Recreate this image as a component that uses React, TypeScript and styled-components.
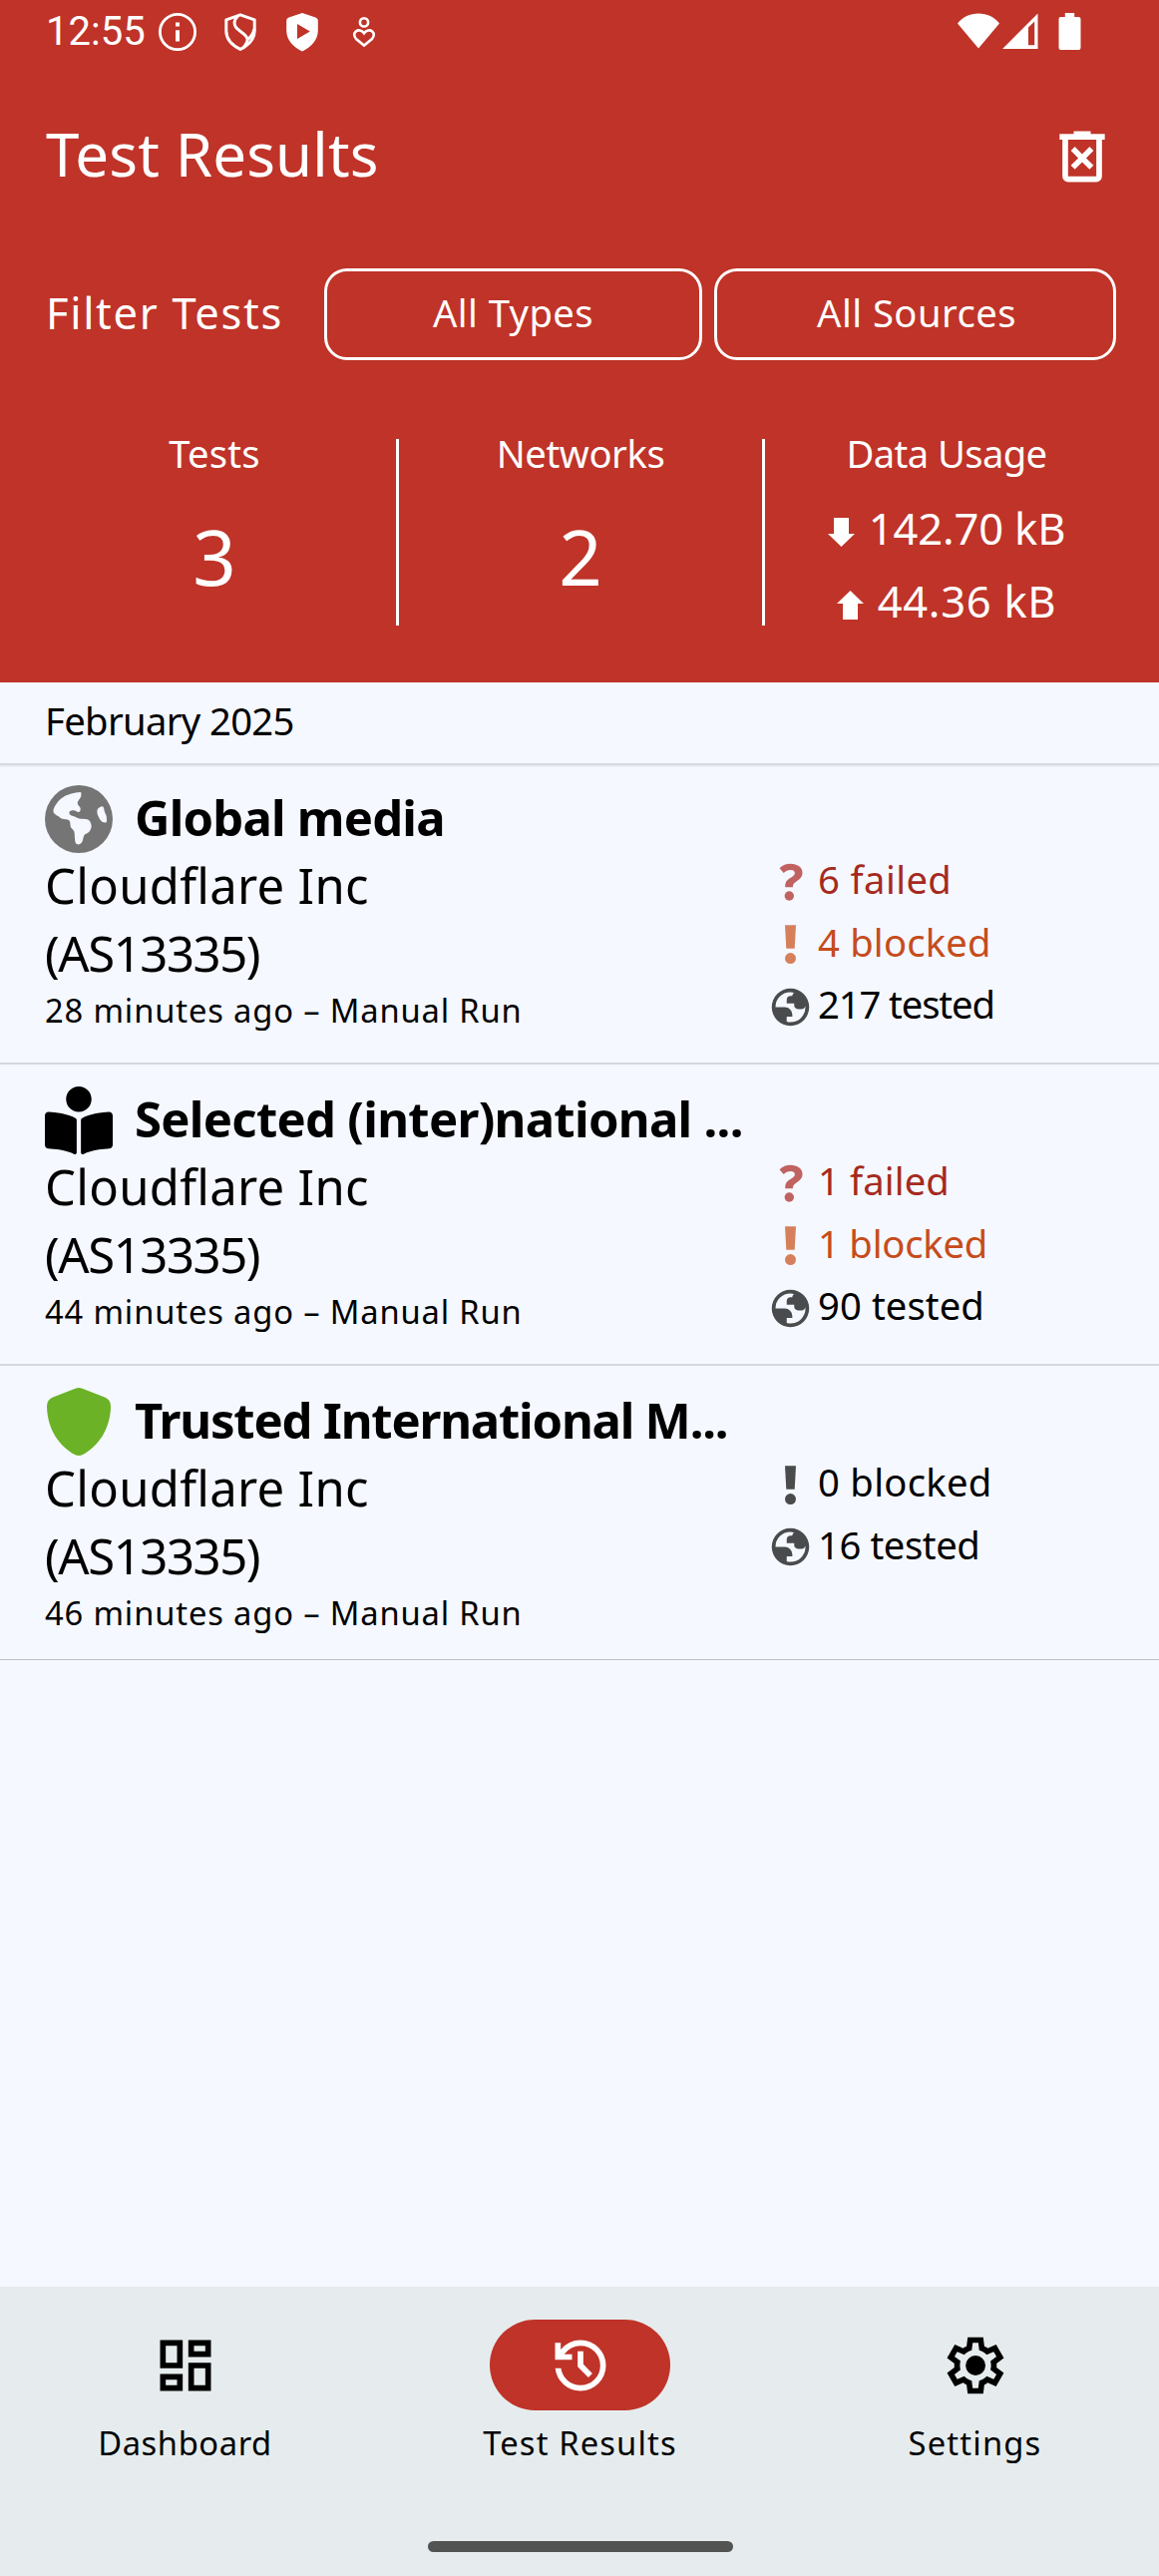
import React from 'react';
import styled, { createGlobalStyle } from 'styled-components';
import { FaBookReader } from 'react-icons/fa';

const GlobalStyle = createGlobalStyle`
  html, body { margin: 0; padding: 0; background: #f5f8ff; }
  *, *::before, *::after { box-sizing: border-box; }
`;

const red = '#bf3328';

const Screen = styled.div`
  width: 1162px;
  height: 2582px;
  display: flex;
  flex-direction: column;
  background: #f5f8ff;
  color: #000;
  font-family: 'Noto Sans', 'Open Sans', sans-serif;
  overflow: hidden;
  white-space: nowrap;
`;

const Header = styled.header`
  height: 684px;
  flex: none;
  background: ${red};
  color: #fff;
`;

const StatusBar = styled.div`
  height: 64px;
  display: flex;
  align-items: center;
  justify-content: space-between;
  padding: 0 78px 0 46px;
`;

const StatusGroup = styled.div<{ $gap: number }>`
  display: flex;
  align-items: center;
  gap: ${(p) => p.$gap}px;
`;

const Clock = styled.span`
  width: 90px;
  font: 400 40px/64px Roboto, sans-serif;
`;

const StatusIcon = styled.svg`
  display: block;
  flex: none;
  width: 40px;
  height: 40px;
`;

const SystemIcon = styled.svg<{ $w: number; $after?: number }>`
  display: block;
  width: ${(p) => p.$w}px;
  height: 38px;
  margin-right: ${(p) => p.$after ?? 0}px;
`;

const TitleBar = styled.div`
  height: 180px;
  display: flex;
  align-items: center;
  justify-content: space-between;
  padding: 0 43px 0 46px;
`;

const Title = styled.h1`
  margin: 0;
  font-size: 60px;
  font-weight: 400;
  line-height: 80px;
  letter-spacing: 0.15px;
`;

const Icon = styled.svg`
  display: block;
  flex: none;
  width: 68px;
  height: 68px;
  fill: currentColor;
`;

const DeleteButton = styled.button`
  margin: 5px 0 0;
  padding: 0;
  border: 0;
  background: none;
  color: inherit;
`;

const FilterRow = styled.div`
  display: flex;
  margin-top: 25px;
  height: 92px;
  padding: 0 43px 0 46px;
`;

const FilterLabel = styled.span`
  width: 279px;
  font-size: 43.5px;
  line-height: 88px;
  letter-spacing: 1.7px;
`;

const FilterButton = styled.button<{ $w: number; $track: number }>`
  width: ${(p) => p.$w}px;
  margin: 0;
  padding: 0 0 5px;
  border: 3px solid #fff;
  border-radius: 23px;
  background: none;
  color: #fff;
  font-family: inherit;
  font-size: 38.2px;
  line-height: 80px;
  letter-spacing: ${(p) => p.$track}px;
  & + & { margin-left: 12px; padding-left: 3px; }
`;

const Stats = styled.div`
  display: flex;
  height: 187px;
  margin-top: 79px;
  padding: 0 31px 0 33px;
`;

const Stat = styled.div`
  flex: 1;
  display: flex;
  flex-direction: column;
  align-items: center;
`;

const StatDivider = styled.div`
  width: 3px;
  background: #fff;
`;

const StatLabel = styled.span<{ $track: number }>`
  font-size: 38.2px;
  line-height: 28px;
  letter-spacing: ${(p) => p.$track}px;
`;

const StatValue = styled.span`
  margin-top: 52px;
  font-size: 76px;
  line-height: 76px;
`;

const Usage = styled.div<{ $track: number }>`
  display: flex;
  align-items: center;
  gap: 14px;
  height: 40px;
  margin-top: 33px;
  font-size: 43.5px;
  line-height: 40px;
  letter-spacing: ${(p) => p.$track}px;
  ${StatLabel} + & { margin-top: 41px; }
`;

const Arrow = styled.svg`
  width: 27px;
  height: 29px;
  margin-top: 8px;
  fill: currentColor;
`;

const Month = styled.div`
  position: relative;
  height: 83px;
  flex: none;
  padding-left: 45px;
  border-bottom: 2px solid #d6dae3;
  box-shadow: 0 1px 2px rgba(0, 0, 0, 0.09);
  font-size: 38.2px;
  line-height: 77px;
  letter-spacing: -0.65px;
`;

const List = styled.main`
  flex: 1;
`;

const Item = styled.article`
  padding: 22px 0 30px 45px;
  border-bottom: 2px solid #d3d7e1;
  &:first-child { padding-top: 20px; }
  &:last-child { padding-bottom: 24px; border-bottom: 1px solid #b9bdc7; }
`;

const ItemHead = styled.div`
  display: flex;
  gap: 22px;
  height: 66px;
`;

const ItemTitle = styled.h2<{ $track: number }>`
  margin: 0;
  font-size: 49px;
  font-weight: 700;
  line-height: 65px;
  letter-spacing: ${(p) => p.$track}px;
`;

const ItemBody = styled.div`
  display: flex;
  height: 182px;
`;

const Details = styled.div`
  width: 725px;
`;

const Network = styled.div<{ $track: number }>`
  font-size: 49px;
  line-height: 68px;
  letter-spacing: ${(p) => p.$track}px;
`;

const Time = styled.div`
  font-size: 32.7px;
  line-height: 47px;
  letter-spacing: 0.85px;
`;

const Counts = styled.div`
  display: flex;
  flex-direction: column;
`;

const tones = {
  failed: { text: '#a52a20', icon: '#c06260' },
  blocked: { text: '#c64c1b', icon: '#d6805b' },
  normal: { text: '#000', icon: '#494b4c' },
};
type Tone = keyof typeof tones;

const Count = styled.div<{ $tone: Tone; $track: number }>`
  display: flex;
  flex: none;
  align-items: center;
  gap: 5px;
  height: 62.5px;
  color: ${(p) => tones[p.$tone].text};
  font-size: 38.2px;
  line-height: 56px;
  letter-spacing: ${(p) => p.$track}px;
  svg { color: ${(p) => tones[p.$tone].icon}; }
  span { padding-bottom: 6px; }
`;

const CountIcon = styled.svg`
  width: 45px;
  height: 45px;
  fill: currentColor;
`;

const Nav = styled.nav`
  flex: none;
  height: 290px;
  display: flex;
  flex-direction: column;
  align-items: center;
  padding: 33px 0 0 1px;
  background: #e6ecee;
`;

const Tabs = styled.div`
  width: 100%;
  height: 222px;
  display: grid;
  grid-template-columns: repeat(3, 1fr);
  column-gap: 27px;
`;

const Tab = styled.div<{ $track: number }>`
  display: flex;
  flex-direction: column;
  align-items: center;
  font-size: 32.7px;
  line-height: 46px;
  letter-spacing: ${(p) => p.$track}px;
`;

const Pill = styled.div<{ $active?: boolean }>`
  width: 181px;
  height: 91px;
  margin-bottom: 10px;
  display: flex;
  align-items: center;
  justify-content: center;
  border-radius: 46px;
  background: ${(p) => (p.$active ? red : 'transparent')};
  color: ${(p) => (p.$active ? '#fff' : '#000')};
`;

const HomeBar = styled.div`
  width: 306px;
  height: 11px;
  border-radius: 6px;
  background: #525453;
`;

const GlobeIcon = () => (
  <Icon viewBox="0 0 68.5 68.5" color="#757575">
    <circle cx="34.25" cy="34.25" r="34.25" />
    <g fill="#f5f8ff">
      <path d="M36 7Q37 7.200 36.700 9.500C36.600 13.500 32.800 15.500 33 18.500C33.200 20.500 36 22 36 24Q36 27 34 27.200C32 27 31 25.400 29 25.400C27 25.400 24.500 26 24.500 28C25 30.500 27 31 29.500 31.600C32 32.300 33 33.800 36 34C40 34.200 43.500 34 45 36C47 38.500 47.200 41 46.800 43C46 46.500 43.500 48.400 40.500 49.700C38.500 51.500 39 55 37.500 57.500C36.500 59.600 34.500 60 33 59.800C30.500 59.300 30.500 56.500 30.200 53.500C29.900 50 30.500 47 28.500 45C26.500 43.300 25.800 42.500 25.700 40C25.600 37 25.500 35.500 22 34.500C18 34.300 16.500 34 14.500 32C11.500 30 9 29.500 8.500 26.500C8.300 23 11 19.500 13.500 16.300C19 9.800 28 7.500 36 7Z" />
      <path d="M58.500 21.300C60.500 23.500 59.500 26 61 28.500C62.500 31 62.700 34 62.300 37.600C59.500 38.200 57 37 55.500 34.500C53.800 31.500 52 28 53 24.800C54 22.500 56 21.500 58.500 21.300Z" />
    </g>
  </Icon>
);

const BookIcon = () => <Icon as={FaBookReader} />;

const ShieldIcon = () => (
  <Icon viewBox="-2 0 68 68" color="#6bb226">
    <path d="M28.500 .8Q32 -.8 35.500 .8L58 9.600Q64.300 12.300 64 19C63.500 42 51 59 36 67Q32 68.800 28 67C13 59 .5 42 0 19Q-.3 12.300 6 9.600Z" />
  </Icon>
);

const countIcons = {
  failed: (
    <CountIcon viewBox="0 0 45 45">
      <path d="M11.500 8.300C14.500 5.200 18.500 3.800 22.500 3.800C29.500 3.800 34.500 7.300 34.500 12.800C34.500 16.800 32 19.200 28.500 21.500C25.800 23.300 24.900 24.300 24.900 27.200H17.300C17 22.500 18.500 20.500 22 18.200C25 16.200 26.900 15.400 26.900 12.900C26.900 10.900 25.200 9.900 22.600 9.900C20 9.900 17.700 10.900 15.700 12.900Z" />
      <circle cx="21.300" cy="36" r="4.700" />
    </CountIcon>
  ),
  blocked: (
    <CountIcon viewBox="0 0 45 45">
      <path d="M17 3.200H28L26.700 26.800H18.300Z" />
      <circle cx="22.500" cy="36.600" r="5.500" />
    </CountIcon>
  ),
  tested: (
    <CountIcon viewBox="0 -960 960 960">
      <path d="M480-80q-83 0-156-31.500T197-197q-54-54-85.500-127T80-480q0-83 31.500-156T197-763q54-54 127-85.500T480-880q83 0 156 31.500T763-763q54 54 85.500 127T880-480q0 83-31.500 156T763-197q-54 54-127 85.500T480-80Zm0-80q134 0 227-93t93-227q0-7-.5-14.500T799-507q-5 29-27 48t-52 19h-80q-33 0-56.500-23.500T560-520v-40H400v-80q0-33 23.500-56.500T480-720h40q0-23 12.500-40.500T563-789q-20-5-40.500-8t-42.500-3q-134 0-227 93t-93 227h200q66 0 113 47t47 113v40H400v110q20 5 39.500 7.500T480-160Z" />
    </CountIcon>
  ),
};

type CountData = { kind: keyof typeof countIcons; tone: Tone; text: string; track: number };
type ResultData = {
  icon: React.ReactNode;
  title: string;
  track: number;
  time: string;
  counts: CountData[];
};

const results: ResultData[] = [
  {
    icon: <GlobeIcon />,
    title: 'Global media',
    track: -0.8,
    time: '28 minutes ago – Manual Run',
    counts: [
      { kind: 'failed', tone: 'failed', text: '6 failed', track: 0.4 },
      { kind: 'blocked', tone: 'blocked', text: '4 blocked', track: 0.2 },
      { kind: 'tested', tone: 'normal', text: '217 tested', track: -1.1 },
    ],
  },
  {
    icon: <BookIcon />,
    title: 'Selected (inter)national ...',
    track: -0.7,
    time: '44 minutes ago – Manual Run',
    counts: [
      { kind: 'failed', tone: 'failed', text: '1 failed', track: 0.1 },
      { kind: 'blocked', tone: 'blocked', text: '1 blocked', track: -0.2 },
      { kind: 'tested', tone: 'normal', text: '90 tested', track: 0.1 },
    ],
  },
  {
    icon: <ShieldIcon />,
    title: 'Trusted International M...',
    track: -1.2,
    time: '46 minutes ago – Manual Run',
    counts: [
      { kind: 'blocked', tone: 'normal', text: '0 blocked', track: 0.3 },
      { kind: 'tested', tone: 'normal', text: '16 tested', track: -0.4 },
    ],
  },
];

export default function App() {
  return (
    <Screen>
      <GlobalStyle />
      <Header>
        <StatusBar>
          <StatusGroup $gap={22.3}>
            <Clock>12:55</Clock>
            <StatusIcon viewBox="0 0 40 40">
              <circle cx="20" cy="20" r="17.600" fill="none" stroke="#fff" strokeWidth="2.800" />
              <path d="M18 10.500h4v4h-4zM18 18.200h4v11.300h-4z" fill="#fff" />
            </StatusIcon>
            <StatusIcon viewBox="0 0 40 40" fill="none" stroke="#fff" strokeWidth="3">
              <path d="M20 2.800L34.200 7.800V19C34.200 27 28 33.500 20 37.400C12 33.500 5.800 27 5.800 19V7.800Z" strokeLinejoin="round" />
              <path d="M17.500 4C13.500 7.500 13 12.500 16 16C19.500 20 26 22 27 27C27.500 30.500 25 33.500 22.500 36.500M34 17C33 21 30.500 25 27 28" />
            </StatusIcon>
            <StatusIcon viewBox="0 0 40 40">
              <path d="M20 1L33.500 5.500Q35.800 6.300 35.800 8.500V18.500C35.800 28 29 35.500 20 39.500C11 35.500 4.200 28 4.200 18.500V8.500Q4.200 6.300 6.500 5.500ZM15 12V27L27.800 19.500Z" fill="#fff" fillRule="evenodd" />
            </StatusIcon>
            <StatusIcon viewBox="0 0 40 40" fill="none" stroke="#fff" strokeWidth="2.600">
              <circle cx="20" cy="10.400" r="4.100" />
              <path d="M20 21.300C17.500 18 14 17.700 11.800 19.500C9.500 21.500 9.800 24.500 12 27L20 33.600L28 27C30.200 24.500 30.500 21.500 28.200 19.500C26 17.700 22.500 18 20 21.300Z" />
            </StatusIcon>
          </StatusGroup>
          <StatusGroup $gap={0}>
            <SystemIcon $w={42} $after={3} viewBox="0 0 42 38">
              <path d="M21 35.500L0 10.500C5 4 12.500 .5 21 .5S37 4 42 10.500Z" fill="#fff" />
            </SystemIcon>
            <SystemIcon $w={36} $after={20} viewBox="0 0 36 38">
              <path d="M0 36L35.500 .5V36ZM26 14.500V32.200H32.200V8.500Z" fill="#fff" fillRule="evenodd" />
            </SystemIcon>
            <SystemIcon $w={23} viewBox="0 0 23 38">
              <path d="M6.800 0h9.400v4h4.300q2 0 2 2v29q0 2-2 2h-18q-2 0-2-2v-29q0-2 2-2h4.300z" fill="#fff" />
            </SystemIcon>
          </StatusGroup>
        </StatusBar>

        <TitleBar>
          <Title>Test Results</Title>
          <DeleteButton aria-label="Delete all">
            <Icon viewBox="0 -960 960 960">
              <path d="m376-300 104-104 104 104 56-56-104-104 104-104-56-56-104 104-104-104-56 56 104 104-104 104 56 56Zm-96 180q-33 0-56.500-23.500T200-200v-520h-40v-80h200v-40h240v40h200v80h-40v520q0 33-23.500 56.500T680-120H280Zm400-600H280v520h400v-520Z" />
            </Icon>
          </DeleteButton>
        </TitleBar>

        <FilterRow>
          <FilterLabel>Filter Tests</FilterLabel>
          <FilterButton $w={379} $track={0.4}>All Types</FilterButton>
          <FilterButton $w={403} $track={0.45}>All Sources</FilterButton>
        </FilterRow>

        <Stats>
          <Stat>
            <StatLabel $track={0.2}>Tests</StatLabel>
            <StatValue>3</StatValue>
          </Stat>
          <StatDivider />
          <Stat>
            <StatLabel $track={-0.4}>Networks</StatLabel>
            <StatValue>2</StatValue>
          </Stat>
          <StatDivider />
          <Stat>
            <StatLabel $track={-0.6}>Data Usage</StatLabel>
            <Usage $track={-0.15}>
              <Arrow viewBox="0 0 27 29"><path d="M6 0h15v16h6L13.500 29L0 16h6z" /></Arrow>
              142.70 kB
            </Usage>
            <Usage $track={0.7}>
              <Arrow viewBox="0 0 27 29"><path d="M6 29h15v-16h6L13.500 0L0 13h6z" /></Arrow>
              44.36 kB
            </Usage>
          </Stat>
        </Stats>
      </Header>

      <Month>February 2025</Month>
      <List>
        {results.map((r) => (
          <Item key={r.title}>
            <ItemHead>
              {r.icon}
              <ItemTitle $track={r.track}>{r.title}</ItemTitle>
            </ItemHead>
            <ItemBody>
              <Details>
                <Network $track={0.3}>Cloudflare Inc</Network>
                <Network $track={-1.4}>(AS13335)</Network>
                <Time>{r.time}</Time>
              </Details>
              <Counts>
                {r.counts.map((c) => (
                  <Count key={c.text} $tone={c.tone} $track={c.track}>
                    {countIcons[c.kind]}
                    <span>{c.text}</span>
                  </Count>
                ))}
              </Counts>
            </ItemBody>
          </Item>
        ))}
      </List>

      <Nav>
        <Tabs>
          <Tab $track={0.6}>
            <Pill>
              <Icon viewBox="0 0 24 24">
                <path d="M19 5v2h-4V5h4M9 5v6H5V5h4m10 8v6h-4v-6h4M9 17v2H5v-2h4M21 3h-8v6h8V3zM11 3H3v10h8V3zm10 8h-8v10h8V11zm-10 4H3v6h8v-6z" />
              </Icon>
            </Pill>
            Dashboard
          </Tab>
          <Tab $track={1.15}>
            <Pill $active>
              <Icon viewBox="0 -960 960 960">
                <path d="M480-120q-138 0-240.500-91.500T122-440h82q14 104 92.500 172T480-200q117 0 198.500-81.500T760-480q0-117-81.500-198.500T480-760q-69 0-129 32t-101 88h110v80H120v-240h80v94q51-64 124.500-99T480-840q75 0 140.500 28.500t114 77q48.500 48.500 77 114T840-480q0 75-28.500 140.500t-77 114q-48.500 48.500-114 77T480-120Zm112-192L440-464v-216h80v184l128 128-56 56Z" />
              </Icon>
            </Pill>
            Test Results
          </Tab>
          <Tab $track={1.2}>
            <Pill>
              <Icon viewBox="0 -960 960 960">
                <path d="m370-80-16-128q-13-5-24.500-12T307-235l-119 50L78-375l103-78q-1-7-1-13.500v-27q0-6.500 1-13.500L78-585l110-190 119 50q11-8 23-15t24-12l16-128h220l16 128q13 5 24.500 12t22.500 15l119-50 110 190-103 78q1 7 1 13.500v27q0 6.500-2 13.500l103 78-110 190-118-50q-11 8-23 15t-24 12L590-80H370Zm70-80h79l14-106q31-8 57.500-23.500T639-327l99 41 39-68-86-65q5-14 7-29.500t2-31.500q0-16-2-31.500t-7-29.500l86-65-39-68-99 42q-22-23-48.500-38.500T533-694l-13-106h-79l-14 106q-31 8-57.500 23.500T321-633l-99-41-39 68 86 64q-5 15-7 30t-2 32q0 16 2 31t7 30l-86 65 39 68 99-42q22 23 48.500 38.500T427-266l13 106Z" />
                <circle cx="481" cy="-480" r="140" />
              </Icon>
            </Pill>
            Settings
          </Tab>
        </Tabs>
        <HomeBar />
      </Nav>
    </Screen>
  );
}
